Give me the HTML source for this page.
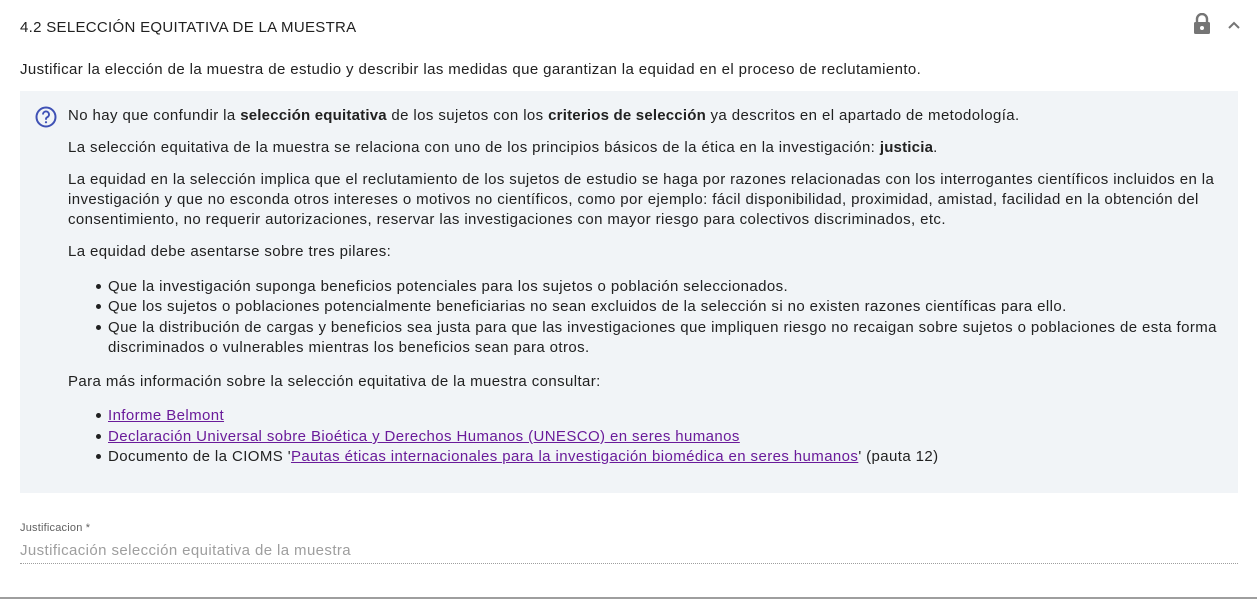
<!DOCTYPE html>
<html><head><meta charset="utf-8"><style>
body{margin:0;width:1257px;height:599px;background:#fff;font-family:"Liberation Sans",sans-serif;color:#212121;position:relative;overflow:hidden}
.l{position:absolute;white-space:nowrap;font-size:15px;letter-spacing:0.4px;line-height:20px}
b{font-weight:bold;letter-spacing:0.2px}
a{color:#6a1b9a;text-decoration:underline}
.box{position:absolute;left:20px;top:91px;width:1218px;height:402px;background:#f1f4f7}
.dot{position:absolute;left:96px;width:5px;height:5px;border-radius:50%;background:#212121}
</style></head><body>
<div class="l" style="left:20px;top:18px;font-size:15px;letter-spacing:0.3px">4.2 SELECCIÓN EQUITATIVA DE LA MUESTRA</div>
<svg style="position:absolute;left:1193px;top:13px" width="18" height="22" viewBox="0 0 18 22"><path d="M4 9V6a5 5 0 0 1 10 0v3" fill="none" stroke="#757575" stroke-width="2.4"/><rect x="1" y="9" width="16" height="12" rx="1.5" fill="#757575"/><circle cx="9" cy="15" r="2" fill="#fff"/></svg>
<svg style="position:absolute;left:1227px;top:20px" width="14" height="10" viewBox="0 0 14 10"><path d="M2 8l5-5 5 5" fill="none" stroke="#757575" stroke-width="2"/></svg>
<div class="l" style="left:20px;top:60px">Justificar la elección de la muestra de estudio y describir las medidas que garantizan la equidad en el proceso de reclutamiento.</div>
<div class="box"></div>
<svg style="position:absolute;left:35px;top:106px" width="22" height="22" viewBox="0 0 22 22"><circle cx="11" cy="11" r="9.5" fill="none" stroke="#3f51b5" stroke-width="2"/><path d="M8 8.5a3 3 0 1 1 4.2 2.7c-.9.4-1.2 1-1.2 2v.6" fill="none" stroke="#3f51b5" stroke-width="1.9"/><circle cx="11" cy="16.2" r="1.1" fill="#3f51b5"/></svg>
<div class="l" style="left:68px;top:106px">No hay que confundir la <b>selección equitativa</b> de los sujetos con los <b>criterios de selección</b> ya descritos en el apartado de metodología.</div>
<div class="l" style="left:68px;top:138px">La selección equitativa de la muestra se relaciona con uno de los principios básicos de la ética en la investigación: <b>justicia</b>.</div>
<div class="l" style="left:68px;top:170px">La equidad en la selección implica que el reclutamiento de los sujetos de estudio se haga por razones relacionadas con los interrogantes científicos incluidos en la</div>
<div class="l" style="left:68px;top:190px">investigación y que no esconda otros intereses o motivos no científicos, como por ejemplo: fácil disponibilidad, proximidad, amistad, facilidad en la obtención del</div>
<div class="l" style="left:68px;top:210px">consentimiento, no requerir autorizaciones, reservar las investigaciones con mayor riesgo para colectivos discriminados, etc.</div>
<div class="l" style="left:68px;top:242px">La equidad debe asentarse sobre tres pilares:</div>
<div class="dot" style="top:284px"></div><div class="l" style="left:108px;top:277px">Que la investigación suponga beneficios potenciales para los sujetos o población seleccionados.</div>
<div class="dot" style="top:304px"></div><div class="l" style="left:108px;top:297px">Que los sujetos o poblaciones potencialmente beneficiarias no sean excluidos de la selección si no existen razones científicas para ello.</div>
<div class="dot" style="top:325px"></div><div class="l" style="left:108px;top:318px">Que la distribución de cargas y beneficios sea justa para que las investigaciones que impliquen riesgo no recaigan sobre sujetos o poblaciones de esta forma</div>
<div class="l" style="left:108px;top:338px">discriminados o vulnerables mientras los beneficios sean para otros.</div>
<div class="l" style="left:68px;top:372px">Para más información sobre la selección equitativa de la muestra consultar:</div>
<div class="dot" style="top:413px"></div><div class="l" style="left:108px;top:406px"><a>Informe Belmont</a></div>
<div class="dot" style="top:434px"></div><div class="l" style="left:108px;top:427px"><a>Declaración Universal sobre Bioética y Derechos Humanos (UNESCO) en seres humanos</a></div>
<div class="dot" style="top:454px"></div><div class="l" style="left:108px;top:447px">Documento de la CIOMS '<a>Pautas éticas internacionales para la investigación biomédica en seres humanos</a>' (pauta 12)</div>
<div class="l" style="left:20px;top:521px;font-size:11px;color:#616161;letter-spacing:0.2px;line-height:14px">Justificacion *</div>
<div class="l" style="left:20px;top:541px;color:#9e9e9e">Justificación selección equitativa de la muestra</div>
<div style="position:absolute;left:20px;top:563px;width:1218px;border-top:1px dotted #9e9e9e"></div>
<div style="position:absolute;left:0;top:597px;width:1257px;height:2px;background:#9e9e9e"></div>
</body></html>
